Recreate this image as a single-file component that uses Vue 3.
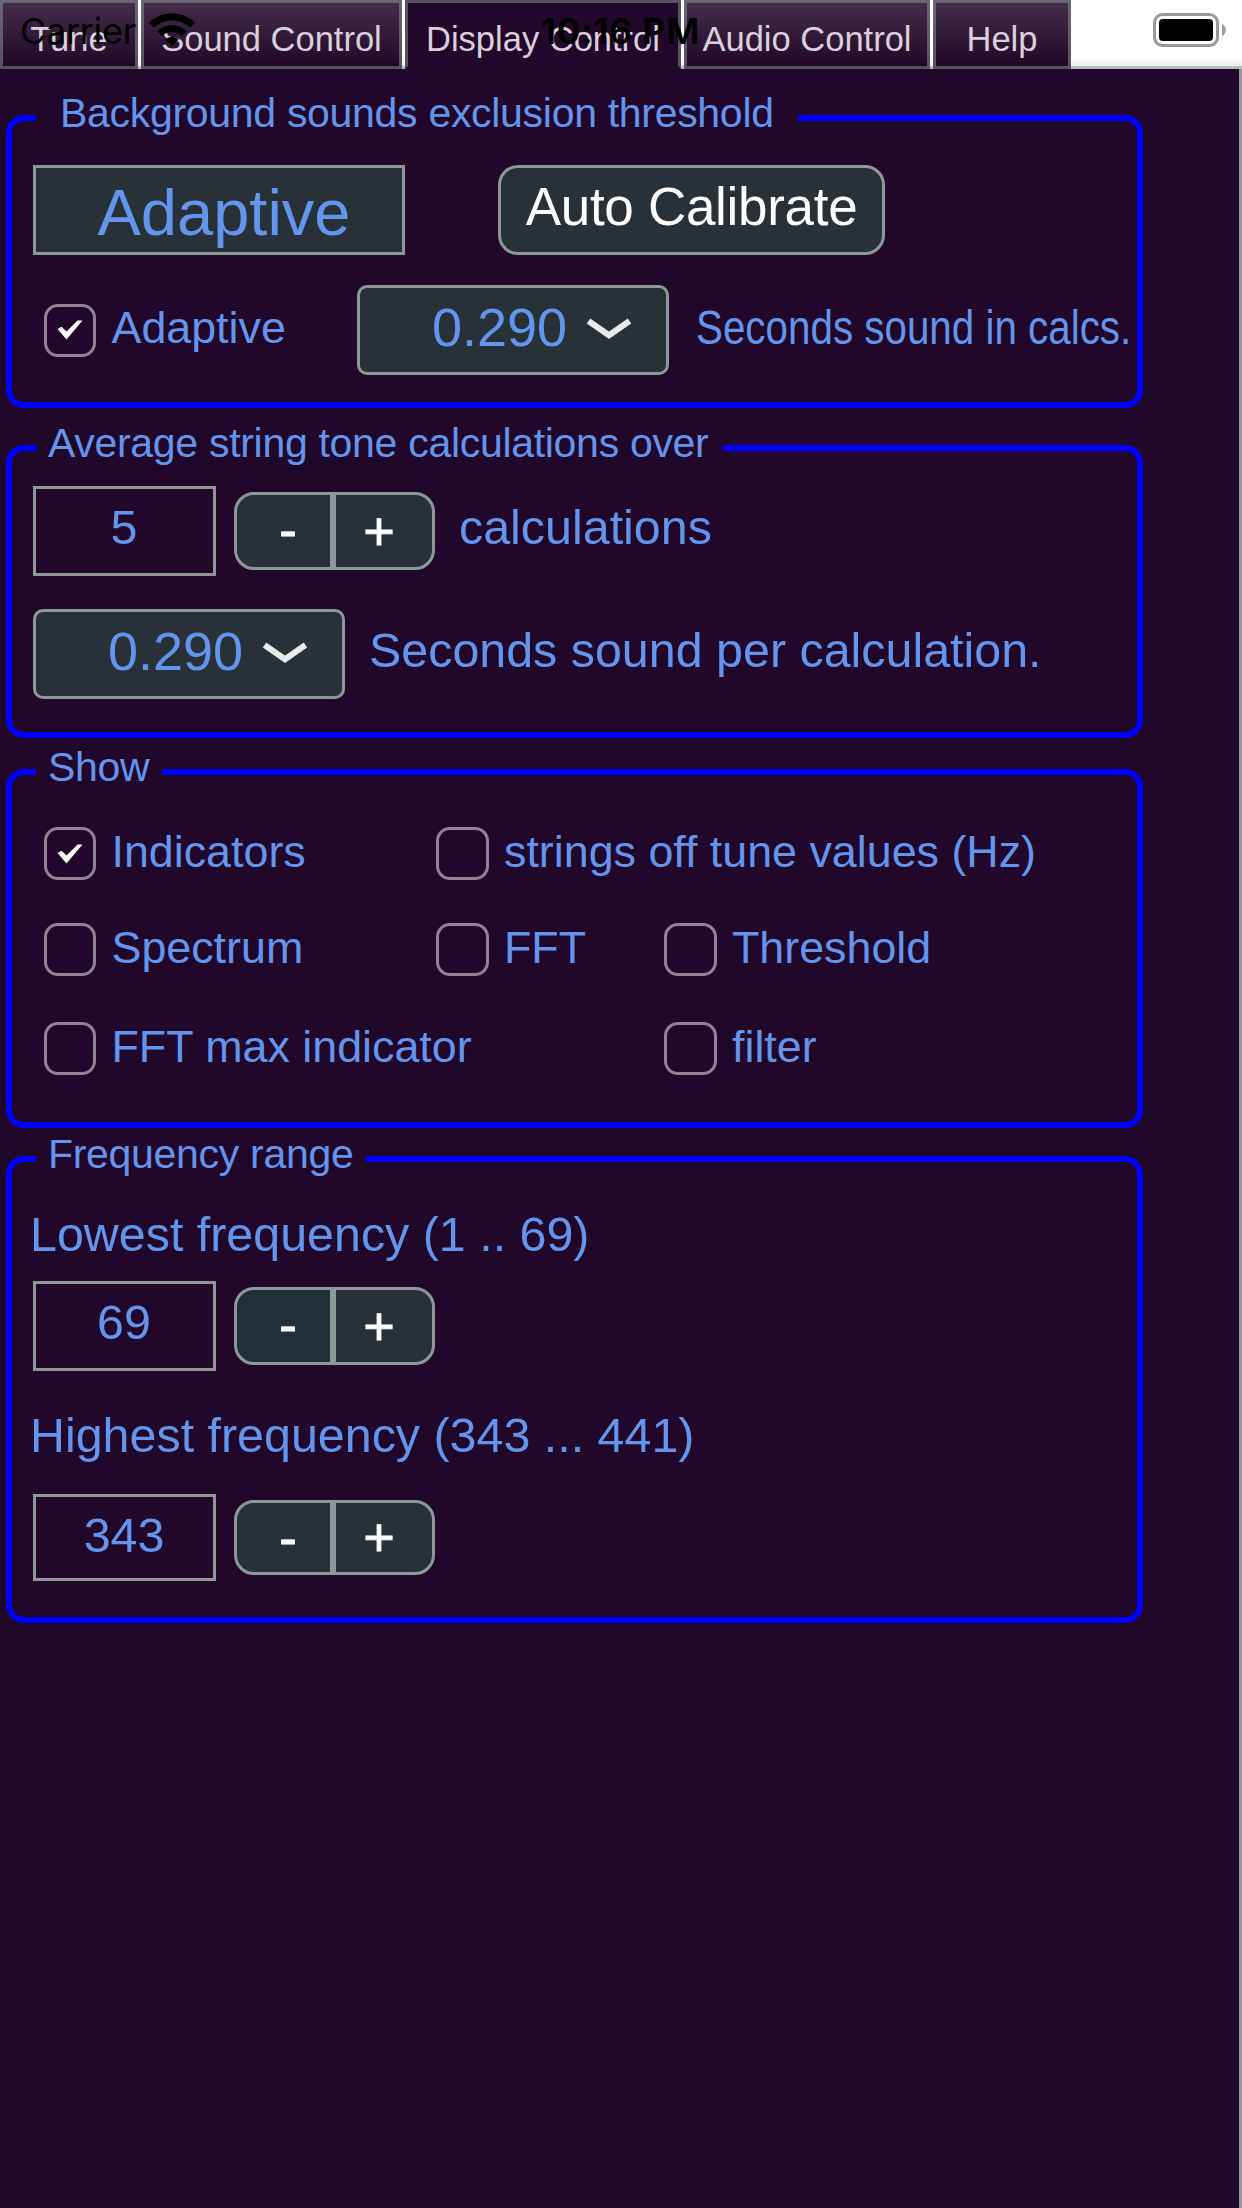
<script setup>
import { ref } from 'vue'

const tabs = [
  { name: 'Tune', width: 138 },
  { name: 'Sound Control', width: 261 },
  { name: 'Display Control', width: 276 },
  { name: 'Audio Control', width: 246 },
  { name: 'Help', width: 138 },
]
const active = ref('Display Control')

const options = ref([
  { label: 'Indicators', on: true, area: 'ind' },
  { label: 'strings off tune values (Hz)', on: false, area: 'str' },
  { label: 'Spectrum', on: false, area: 'spe' },
  { label: 'FFT', on: false, area: 'fft' },
  { label: 'Threshold', on: false, area: 'thr' },
  { label: 'FFT max indicator', on: false, area: 'max' },
  { label: 'filter', on: false, area: 'fil' },
])
const adaptive = ref(true)
const count = ref(5)
const low = ref(69)
const high = ref(343)
</script>

<template>
  <div class="app">
    <header class="bar">
      <nav class="tabs">
        <div
          v-for="t in tabs"
          :key="t.name"
          class="tab"
          :class="{ active: t.name === active }"
          :style="{ width: t.width + 'px' }"
          @click="active = t.name"
        >{{ t.name }}</div>
      </nav>

      <div class="status">
        <span class="carrier">Carrier</span>
        <svg class="wifi" width="46" height="34" viewBox="0 0 46 34">
          <path d="M0 9.8A32.6 32.6 0 0 1 46 9.8L41.2 14.7A25.8 25.8 0 0 0 4.8 14.7Z" />
          <path d="M8.2 18.2A21 21 0 0 1 37.8 18.2L33 23A14.2 14.2 0 0 0 13 23Z" />
          <path d="M16.3 26.4A9.6 9.6 0 0 1 29.7 26.4L23 33.2Z" />
        </svg>
        <span class="clock">10:16 PM</span>
        <svg class="battery" width="74" height="34" viewBox="0 0 74 34">
          <rect x="1.5" y="1.5" width="63" height="31" rx="8" fill="none" stroke="#999" stroke-width="3" />
          <rect x="6" y="6" width="54" height="22" rx="4" />
          <path d="M69 11c5 2 5 10 0 12z" fill="#999" />
        </svg>
      </div>
    </header>

    <main class="page">
      <fieldset class="panel threshold">
        <legend>Background sounds exclusion threshold</legend>
        <div class="row first">
          <div class="readout">Adaptive</div>
          <button class="button">Auto Calibrate</button>
        </div>
        <div class="row second">
          <div class="check" @click="adaptive = !adaptive">
            <span class="box">
              <svg v-if="adaptive" width="26" height="20" viewBox="0 0 26 20"><path d="M.5 9 4.5 6.8 9.5 11.6 20.5.6 25.5.4 9.5 19.6Z" /></svg>
            </span>
            <span class="check-label">Adaptive</span>
          </div>
          <div class="combo">
            <span>0.290</span>
            <svg width="46" height="22" viewBox="0 0 46 22"><path d="M2.5 3 23 17.3 43.5 3" /></svg>
          </div>
          <span class="text squeezed">Seconds sound in calcs.</span>
        </div>
      </fieldset>

      <fieldset class="panel average">
        <legend>Average string tone calculations over</legend>
        <div class="row">
          <div class="value">{{ count }}</div>
          <div class="stepper">
            <button class="minus" @click="count--">-</button>
            <button class="plus" @click="count++">+</button>
          </div>
          <span class="text calc">calculations</span>
        </div>
        <div class="row per">
          <div class="combo">
            <span>0.290</span>
            <svg width="46" height="22" viewBox="0 0 46 22"><path d="M2.5 3 23 17.3 43.5 3" /></svg>
          </div>
          <span class="text seconds">Seconds sound per calculation.</span>
        </div>
      </fieldset>

      <fieldset class="panel show">
        <legend>Show</legend>
        <div class="options">
          <div
            v-for="o in options"
            :key="o.label"
            class="check"
            :class="o.area"
            @click="o.on = !o.on"
          >
            <span class="box">
              <svg v-if="o.on" width="26" height="20" viewBox="0 0 26 20"><path d="M.5 9 4.5 6.8 9.5 11.6 20.5.6 25.5.4 9.5 19.6Z" /></svg>
            </span>
            <span class="check-label">{{ o.label }}</span>
          </div>
        </div>
      </fieldset>

      <fieldset class="panel range">
        <legend>Frequency range</legend>
        <p class="lowest">Lowest frequency (1 .. 69)</p>
        <div class="row">
          <div class="value">{{ low }}</div>
          <div class="stepper">
            <button class="minus focused" @click="low--">-</button>
            <button class="plus" @click="low++">+</button>
          </div>
        </div>
        <p class="highest">Highest frequency (343 ... 441)</p>
        <div class="row short">
          <div class="value">{{ high }}</div>
          <div class="stepper">
            <button class="minus" @click="high--">-</button>
            <button class="plus" @click="high++">+</button>
          </div>
        </div>
      </fieldset>
    </main>
  </div>
</template>

<style>
body {
  background: #21072a;
}
</style>

<style scoped>
.app {
  width: 1242px;
  height: 2208px;
  display: flex;
  flex-direction: column;
  overflow: hidden;
  background: #21072a;
  color: #6495ed;
  font-family: "Liberation Sans", Arial, sans-serif;
  white-space: nowrap;
}
.app * {
  box-sizing: border-box;
}

/* header */
.bar {
  position: relative;
  display: flex;
  height: 69px;
  flex: none;
  background: linear-gradient(#fff 58px, #ececec 66px, #b4bebe 66px);
}
.tabs {
  display: flex;
  gap: 3px;
}
.tab {
  height: 69px;
  border: 3px solid rgba(143, 155, 155, 0.5);
  background: linear-gradient(#46304c, #1f0526) border-box;
  color: #d9d0db;
  font-size: 34.5px;
  line-height: 54px;
  padding-top: 9px;
  text-align: center;
}
.tab.active {
  background: #21072a;
  border-bottom-color: transparent;
}
.status {
  position: absolute;
  inset: 0;
  color: #000;
  font-family: Inter, sans-serif;
  font-size: 36px;
  line-height: 44px;
}
.carrier,
.clock,
.wifi,
.battery {
  position: absolute;
}
.carrier {
  left: 20px;
  top: 9px;
  letter-spacing: -0.3px;
}
.wifi {
  left: 149px;
  top: 13px;
}
.clock {
  left: 541px;
  top: 9px;
  font-weight: 600;
  letter-spacing: 0.6px;
}
.battery {
  left: 1153px;
  top: 13px;
}

/* page */
.page {
  flex: 1;
  border-right: 3px solid #929a9b;
  padding: 20px 0 0 6px;
}
.panel {
  width: 1137px;
  min-width: 0;
  margin: 0;
  padding: 0 0 0 21px;
  border: 6px solid #00f;
  border-radius: 18px;
}
legend {
  height: 58px;
  margin-left: 3px;
  padding: 1px 0 11px 12px;
  font-size: 41px;
  line-height: 46px;
  letter-spacing: -0.3px;
}
.threshold { height: 319px; }
.threshold legend { width: 762px; padding-left: 24px; }
.average { height: 319px; margin-top: 11px; }
.average legend { width: 687px; }
.show { height: 385px; margin-top: 5px; }
.show legend { width: 126px; }
.range { height: 493px; margin-top: 2px; }
.range legend { width: 330px; }

.row {
  display: flex;
  align-items: center;
  height: 90px;
}
.row > * {
  flex: none;
}
.first { margin-top: 18px; gap: 93px; }
.second { margin-top: 30px; padding-left: 11px; }
.second .check { width: 313px; }

.readout,
.button,
.combo {
  height: 90px;
  border: 3px solid #8f9899;
  background: #273137;
}
.readout {
  width: 372px;
  padding: 4px 0 0 10px;
  font-size: 65px;
  line-height: 81px;
  text-align: center;
}
.button {
  width: 387px;
  border-radius: 20px;
  color: #fff;
  font: 53px/76px "Liberation Sans", Arial, sans-serif;
  letter-spacing: -0.3px;
  padding: 0 0 7px;
}
.combo {
  display: flex;
  align-items: center;
  width: 312px;
  border-radius: 10px;
  padding: 0 0 0 72px;
  font-size: 54px;
  line-height: 77px;
}
.combo span {
  width: 154px;
  padding-bottom: 6px;
}
.combo svg {
  margin-top: -2px;
  fill: none;
  stroke: #eaeaea;
  stroke-width: 6;
}
.text {
  font-size: 48.4px;
  line-height: 60px;
}
.squeezed {
  margin-left: 27px;
  padding-bottom: 6px;
  transform: scaleX(0.834);
  transform-origin: left;
}
.calc { margin-left: 24px; padding-bottom: 9px; }
.seconds { margin-left: 24px; padding-bottom: 8px; }

.check {
  display: flex;
  align-items: center;
  height: 53px;
}
.box {
  flex: none;
  display: flex;
  align-items: center;
  justify-content: center;
  width: 52.5px;
  height: 53px;
  margin-left: -0.5px;
  border: 3px solid #918396;
  border-radius: 14px;
}
.box svg {
  fill: #fff;
}
.check-label {
  margin-left: 15.5px;
  padding-bottom: 7px;
  font-size: 44.8px;
  line-height: 52px;
}

.average .row { margin-top: 9px; height: 90px; }
.average .per { margin-top: 33px; }
.value {
  width: 183px;
  height: 90px;
  border: 3px solid #8f9899;
  padding: 1px 1px 0 0;
  font-size: 48.4px;
  line-height: 74px;
  text-align: center;
}
.stepper {
  display: flex;
  margin-left: 18px;
  height: 78px;
}
.stepper button {
  border: 3px solid #8f9899;
  background: #273137;
  color: #fff;
  font: 54px/68px "Liberation Sans", Arial, sans-serif;
  -webkit-text-stroke: 0.8px #fff;
  padding: 0;
}
.minus { width: 99px; border-radius: 20px 0 0 20px; }
.plus { width: 102px; border-radius: 0 20px 20px 0; }
.stepper .minus { padding: 0 0 5px 9px; }
.stepper .plus { padding: 0 10px 1px 0; }
.stepper .focused { background: #212f38; }

.options {
  display: grid;
  grid-template-columns: 392.5px 228px 1fr;
  grid-template-rows: 53px 53px 53px;
  grid-template-areas: "ind str str" "spe fft thr" "max max fil";
  row-gap: 44px;
  padding: 26px 0 0 11px;
}
.options .check-label { padding-bottom: 5px; }
.ind { grid-area: ind; }
.str { grid-area: str; }
.spe { grid-area: spe; }
.fft { grid-area: fft; }
.thr { grid-area: thr; }
.max { grid-area: max; }
.fil { grid-area: fil; }
.spe, .fft, .thr { margin-top: -1px; }
.max, .fil { margin-top: 1px; }

.range p {
  margin: 0 0 0 -3px;
  font-size: 48.4px;
  line-height: 60px;
}
.range .lowest { margin-top: 16px; margin-bottom: 17px; }
.range .highest { margin-top: 34px; margin-bottom: 29px; }
.short { height: 87px; }
.short .value { height: 87px; }
.short .stepper { height: 75px; }
</style>
